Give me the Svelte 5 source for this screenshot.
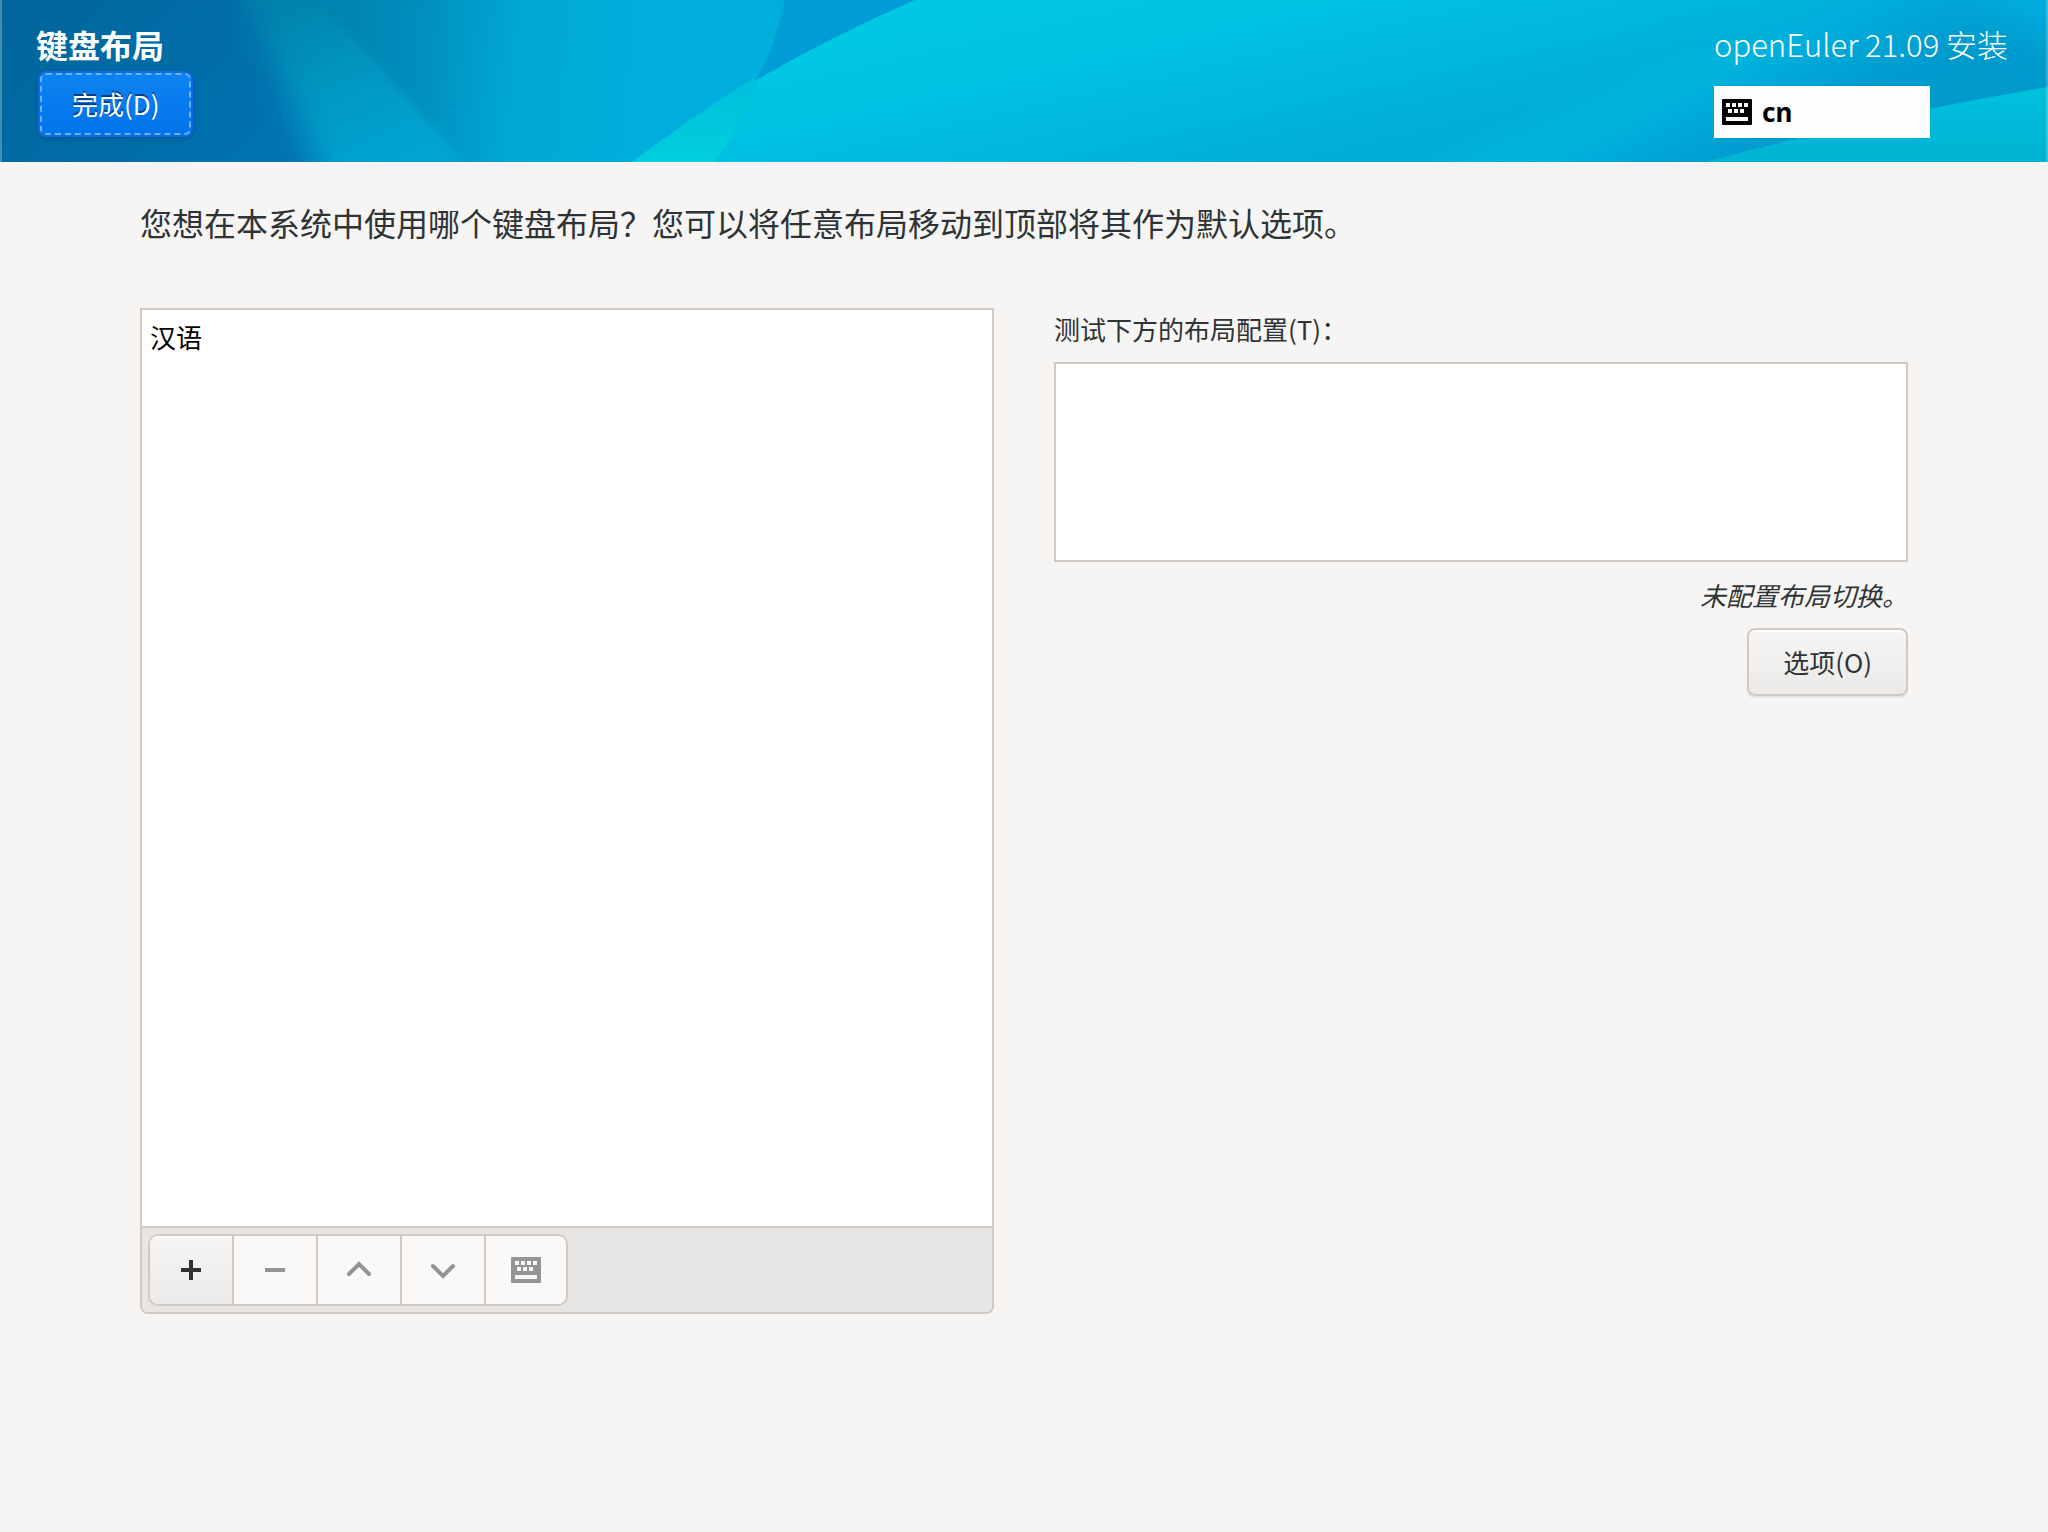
<script>
  let layouts = $state(['汉语']);
  let sample = $state('');
</script>

{#snippet keyboard()}
  <svg class="kbd" viewBox="0 0 30 26" aria-hidden="true">
    <path
      fill="currentColor"
      fill-rule="evenodd"
      d="M1 0H29Q30 0 30 1V25Q30 26 29 26H1Q0 26 0 25V1Q0 0 1 0ZM4 4V8H8V4ZM10 4V8H14V4ZM16 4V8H20V4ZM22 4V8H26V4ZM6 10V14H10V10ZM12 10V14H16V10ZM18 10V14H22V10ZM4 18V22H26V18Z"
    />
  </svg>
{/snippet}

<div class="page">
  <header>
    <svg class="backdrop" viewBox="0 0 2048 162" preserveAspectRatio="none" aria-hidden="true">
      <defs>
        <linearGradient id="deep" x1="0" y1="0" x2="1" y2="0.3">
          <stop offset="0" stop-color="#00659a" />
          <stop offset="1" stop-color="#0077b8" />
        </linearGradient>
        <linearGradient id="mid" gradientUnits="userSpaceOnUse" x1="340" y1="0" x2="640" y2="30">
          <stop offset="0" stop-color="#0082ae" />
          <stop offset="0.3" stop-color="#0090c0" />
          <stop offset="0.6" stop-color="#00a8d2" />
          <stop offset="1" stop-color="#00aedb" />
        </linearGradient>
        <linearGradient id="band" gradientUnits="userSpaceOnUse" x1="300" y1="0" x2="370" y2="162">
          <stop offset="0" stop-color="#0084ac" />
          <stop offset="0.5" stop-color="#0096c0" />
          <stop offset="1" stop-color="#00a4d0" />
        </linearGradient>
        <linearGradient id="bright" gradientUnits="userSpaceOnUse" x1="1180" y1="-40" x2="1230" y2="180">
          <stop offset="0" stop-color="#00c8e2" />
          <stop offset="0.4" stop-color="#00c0e1" />
          <stop offset="1" stop-color="#00add9" />
        </linearGradient>
        <linearGradient id="corner" gradientUnits="userSpaceOnUse" x1="1680" y1="0" x2="1760" y2="150">
          <stop offset="0" stop-color="#00bfe2" />
          <stop offset="0.5" stop-color="#00b1dd" />
          <stop offset="1" stop-color="#009acd" />
        </linearGradient>
        <linearGradient id="wedge" x1="0" y1="0" x2="0" y2="1">
          <stop offset="0" stop-color="#00c0de" />
          <stop offset="1" stop-color="#00b3d2" />
        </linearGradient>
        <linearGradient id="glint" x1="0" y1="0" x2="0" y2="1">
          <stop offset="0" stop-color="#00bedd" />
          <stop offset="1" stop-color="#00cfdc" />
        </linearGradient>
        <filter id="edge" x="-5%" y="-10%" width="110%" height="120%"><feGaussianBlur stdDeviation="5 3" /></filter>
        <filter id="soft" x="-20%" y="-20%" width="140%" height="140%"><feGaussianBlur stdDeviation="16 8" /></filter>
        <filter id="wide" x="-20%" y="-40%" width="140%" height="180%"><feGaussianBlur stdDeviation="36 12" /></filter>
      </defs>
      <rect width="500" height="162" fill="url(#deep)" />
      <path d="M222 -60L345 230H900V-60Z" fill="url(#band)" filter="url(#soft)" />
      <path d="M270 -60L318 0Q385 70 462 162L510 220H1000V-60Z" fill="url(#mid)" filter="url(#edge)" />
      <path d="M785 0Q775 50 755 82L920 0Z" fill="#009cd5" />
      <path d="M915 0Q758 68 632 162H2048V0Z" fill="url(#bright)" />
      <path d="M755 77Q690 118 632 162H714Q750 115 755 77Z" fill="url(#glint)" />
      <path d="M1500 240L1690 60L2000 -60H2120V240Z" fill="url(#corner)" filter="url(#wide)" />
      <path d="M1420 170L1640 72L1800 40L1700 90L1560 170Z" fill="#00b9df" opacity="0.5" filter="url(#soft)" />
      <path d="M1960 -30Q2010 30 2100 60V-30Z" fill="#00b0e0" filter="url(#wide)" />
      <path d="M1705 162Q1880 115 2048 87V162Z" fill="url(#wedge)" />
      <rect width="2" height="162" fill="#fff" opacity="0.25" />
      <rect x="2046" width="2" height="162" fill="#fff" opacity="0.2" />
    </svg>
    <div class="bar">
      <div class="spoke">
        <h1>键盘布局</h1>
        <button class="done" type="button">完成(D)</button>
      </div>
      <div class="product">
        <span class="release">openEuler 21.09 安装</span>
        <button class="indicator" type="button">{@render keyboard()}<span>cn</span></button>
      </div>
    </div>
  </header>

  <main>
    <p class="question">您想在本系统中使用哪个键盘布局？您可以将任意布局移动到顶部将其作为默认选项。</p>
    <div class="columns">
      <section class="chooser">
        <ul>
          {#each layouts as layout}
            <li>{layout}</li>
          {/each}
        </ul>
        <div class="toolbar">
          <div class="group">
            <button type="button" aria-label="添加">
              <svg viewBox="0 0 32 32"><path d="M6 16H26M16 6V26" stroke-width="4" /></svg>
            </button>
            <button type="button" aria-label="移除" disabled>
              <svg viewBox="0 0 32 32"><path d="M6 16H26" stroke-width="4" /></svg>
            </button>
            <button type="button" aria-label="上移" disabled>
              <svg viewBox="0 0 32 32"><path d="M6 20L16 10L26 20" stroke-width="4" stroke-linecap="round" /></svg>
            </button>
            <button type="button" aria-label="下移" disabled>
              <svg viewBox="0 0 32 32"><path d="M6 12L16 22L26 12" stroke-width="4" stroke-linecap="round" /></svg>
            </button>
            <button type="button" aria-label="预览布局" disabled>{@render keyboard()}</button>
          </div>
        </div>
      </section>
      <section class="tester">
        <label for="sample">测试下方的布局配置(T)：</label>
        <textarea id="sample" bind:value={sample}></textarea>
        <p class="hint">未配置布局切换。</p>
        <button class="options" type="button">选项(O)</button>
      </section>
    </div>
  </main>
</div>

<style>
  :global(body) {
    margin: 0;
    background: #f6f5f3;
  }
  .page {
    min-height: 100vh;
    box-sizing: border-box;
    background: #f6f5f3;
    color: #2e3436;
    font: 26px/40px 'Noto Sans CJK SC', 'Noto Sans', sans-serif;
  }
  button,
  textarea {
    box-sizing: border-box;
    margin: 0;
    font: inherit;
    color: inherit;
  }
  header {
    display: grid;
    color: #fff;
  }
  .backdrop {
    grid-area: 1 / 1;
    contain: size;
    width: 100%;
    height: 100%;
    display: block;
  }
  .bar {
    grid-area: 1 / 1;
    z-index: 1;
    display: flex;
    justify-content: space-between;
    padding: 20px 36px 24px;
  }
  .spoke,
  .product {
    display: flex;
    flex-direction: column;
    align-items: flex-start;
  }
  .product {
    min-width: 298px;
  }
  h1 {
    margin: 0;
    font-size: 32px;
    line-height: 48px;
    font-weight: 700;
  }
  .done {
    height: 66px;
    margin: 3px 0 0 2px;
    padding: 0 32px;
    border: 2px solid #1169e2;
    border-radius: 8px;
    outline: 2px dashed #6cb2fa;
    outline-offset: -4px;
    background: linear-gradient(#0d84f2, #0073ea);
    box-shadow: 0 2px 4px #0033664d;
    text-shadow: 0 -2px #0a3d80;
    color: #fff;
  }
  .release {
    font-size: 31px;
    line-height: 48px;
    font-weight: 300;
  }
  .indicator {
    display: flex;
    align-items: center;
    gap: 10px;
    width: 216px;
    height: 52px;
    margin-top: 18px;
    padding: 0 8px;
    border: 0;
    background: #fdfdfd;
    color: #000;
    font: 700 26px/40px 'Noto Sans', sans-serif;
  }
  .kbd {
    width: 30px;
    height: 26px;
    display: block;
  }
  main {
    padding: 36px 140px;
  }
  .question {
    margin: 0 0 62px;
    font-size: 32px;
    line-height: 48px;
  }
  .columns {
    display: grid;
    grid-template-columns: 1fr 1fr;
    gap: 60px;
    align-items: start;
  }
  .chooser {
    border: 2px solid #d0c9c4;
    border-radius: 0 0 8px 8px;
    overflow: hidden;
  }
  ul {
    box-sizing: border-box;
    min-height: calc(60vh - 3px);
    margin: 0;
    padding: 7px 8px;
    list-style: none;
    background: #fff;
    color: #000;
  }
  .toolbar {
    padding: 6px;
    border-top: 2px solid #d0c9c4;
    background: #e8e6e4;
  }
  .group {
    display: inline-flex;
    vertical-align: top;
    border: 2px solid #d0c9c4;
    border-radius: 10px;
    overflow: hidden;
  }
  .group button {
    display: flex;
    align-items: center;
    justify-content: center;
    width: 84px;
    height: 68px;
    padding: 0;
    border: 0;
    border-right: 2px solid #d0c9c4;
    background: linear-gradient(#f6f5f4, #ebeae8);
    box-shadow: inset 0 2px #fff;
  }
  .group button:disabled {
    background: #faf9f8;
    color: #929595;
    box-shadow: none;
  }
  .group button:last-child {
    width: 80px;
    border-right: 0;
  }
  .group button > svg:not(.kbd) {
    width: 32px;
    height: 32px;
    fill: none;
    stroke: currentColor;
  }
  .tester {
    display: flex;
    flex-direction: column;
    align-items: flex-end;
  }
  label {
    align-self: flex-start;
    margin: 1px 0 13px;
  }
  textarea {
    width: 100%;
    height: 200px;
    padding: 8px;
    border: 2px solid #d0c9c4;
    background: #fff;
    resize: none;
    outline: 0;
  }
  .hint {
    margin: 13px 0;
    font-style: italic;
  }
  .options {
    height: 68px;
    padding: 0 34px;
    border: 2px solid #d0c9c4;
    border-radius: 8px;
    background: linear-gradient(#f6f5f4, #ebeae8);
    box-shadow: inset 0 2px #fff, 0 2px 2px #00000012;
  }
</style>
